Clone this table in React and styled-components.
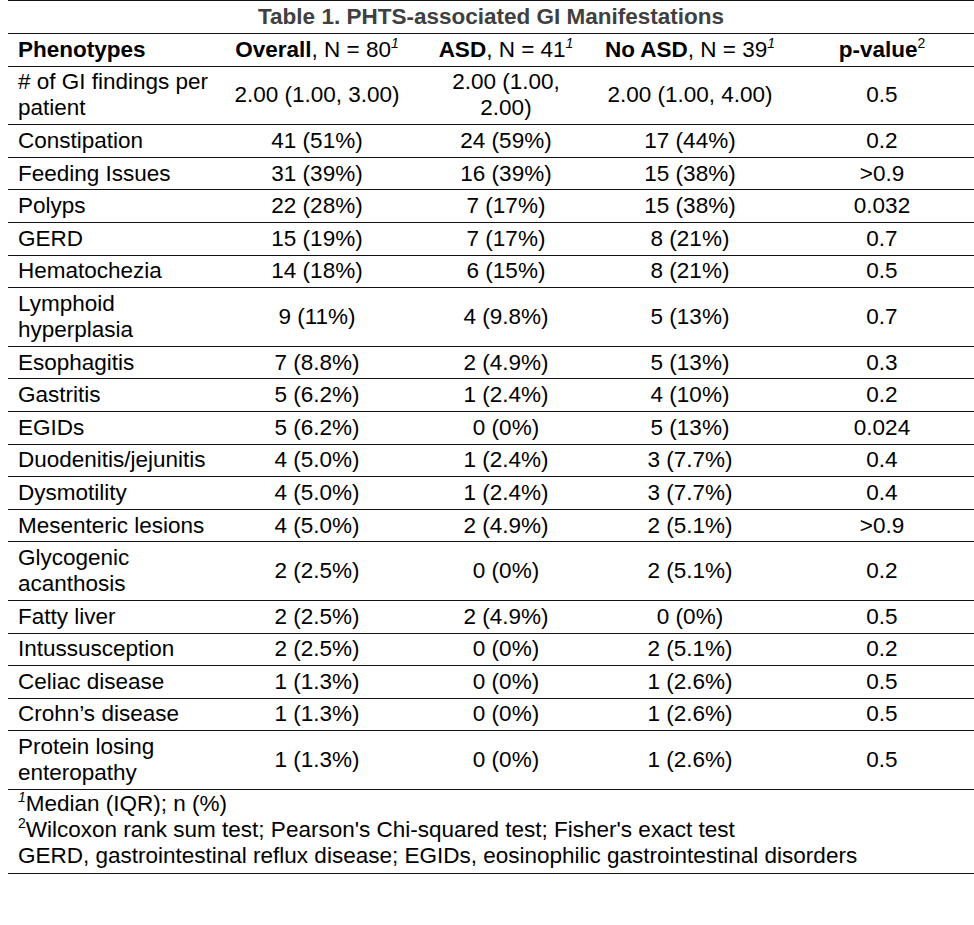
import React from "react";
import styled, { createGlobalStyle } from "styled-components";

const Global = createGlobalStyle`
  html, body { margin: 0; padding: 0; background: #ffffff; }
  body { font-family: "Liberation Sans", Arial, sans-serif; color: #000; }
`;

const Page = styled.div`
  padding: 0 0 0 8px;
`;

const Table = styled.table`
  width: 966px;
  border-collapse: collapse;
  table-layout: fixed;
  font-family: "Liberation Sans", Arial, sans-serif;
  font-size: 22.5px;
  line-height: 26px;
  color: #000;
  border-top: 1px solid #111;
  border-bottom: 1px solid #111;
`;

const TitleCell = styled.th`
  padding: 3px 10px 3px;
  text-align: center;
  font-weight: bold;
  color: #404040;
  border-bottom: 1px solid #111;
`;

const HeadCell = styled.th`
  padding: 2.8px ${(p) => p.$padR ?? 10}px 2.8px ${(p) => p.$padL ?? 10}px;
  font-weight: normal;
  text-align: ${(p) => p.$align || "center"};
  vertical-align: middle;
  border-bottom: 1px solid #111;
  white-space: nowrap;
`;

const Cell = styled.td`
  padding: 2.8px ${(p) => p.$padR ?? 10}px 2.8px ${(p) => p.$padL ?? 10}px;
  text-align: ${(p) => p.$align || "center"};
  vertical-align: middle;
  border-bottom: 1px solid #111;
`;

const Bold = styled.b`
  font-weight: bold;
`;

const Sup = styled.sup`
  font-size: 14px;
  line-height: 0;
  position: relative;
  top: -0.6em;
  vertical-align: baseline;
  font-style: ${(p) => (p.$italic ? "italic" : "normal")};
  font-weight: normal;
`;

const FootCell = styled.td`
  padding: 1px 10px 4px;
  text-align: left;
  vertical-align: top;
`;

const FootLine = styled.div`
  line-height: 26px;
`;

const rows = [
  ["# of GI findings per patient", "2.00 (1.00, 3.00)", "2.00 (1.00, 2.00)", "2.00 (1.00, 4.00)", "0.5"],
  ["Constipation", "41 (51%)", "24 (59%)", "17 (44%)", "0.2"],
  ["Feeding Issues", "31 (39%)", "16 (39%)", "15 (38%)", ">0.9"],
  ["Polyps", "22 (28%)", "7 (17%)", "15 (38%)", "0.032"],
  ["GERD", "15 (19%)", "7 (17%)", "8 (21%)", "0.7"],
  ["Hematochezia", "14 (18%)", "6 (15%)", "8 (21%)", "0.5"],
  ["Lymphoid hyperplasia", "9 (11%)", "4 (9.8%)", "5 (13%)", "0.7"],
  ["Esophagitis", "7 (8.8%)", "2 (4.9%)", "5 (13%)", "0.3"],
  ["Gastritis", "5 (6.2%)", "1 (2.4%)", "4 (10%)", "0.2"],
  ["EGIDs", "5 (6.2%)", "0 (0%)", "5 (13%)", "0.024"],
  ["Duodenitis/jejunitis", "4 (5.0%)", "1 (2.4%)", "3 (7.7%)", "0.4"],
  ["Dysmotility", "4 (5.0%)", "1 (2.4%)", "3 (7.7%)", "0.4"],
  ["Mesenteric lesions", "4 (5.0%)", "2 (4.9%)", "2 (5.1%)", ">0.9"],
  ["Glycogenic acanthosis", "2 (2.5%)", "0 (0%)", "2 (5.1%)", "0.2"],
  ["Fatty liver", "2 (2.5%)", "2 (4.9%)", "0 (0%)", "0.5"],
  ["Intussusception", "2 (2.5%)", "0 (0%)", "2 (5.1%)", "0.2"],
  ["Celiac disease", "1 (1.3%)", "0 (0%)", "1 (2.6%)", "0.5"],
  ["Crohn’s disease", "1 (1.3%)", "0 (0%)", "1 (2.6%)", "0.5"],
  ["Protein losing enteropathy", "1 (1.3%)", "0 (0%)", "1 (2.6%)", "0.5"],
];

const widths = [212, 194, 184, 184, 192];
const pads = [
  { $padL: 10, $padR: 8, $align: "left" },
  {},
  { $padL: 12, $padR: 12 },
  { $padL: 6, $padR: 6 },
  { $padL: 10, $padR: 2 },
];

export default function App() {
  return (
    <>
      <Global />
      <Page>
        <Table>
          <colgroup>
            {widths.map((w, i) => (
              <col key={i} style={{ width: w }} />
            ))}
          </colgroup>
          <thead>
            <tr>
              <TitleCell colSpan={5}>Table 1. PHTS-associated GI Manifestations</TitleCell>
            </tr>
            <tr>
              <HeadCell {...pads[0]}>
                <Bold>Phenotypes</Bold>
              </HeadCell>
              <HeadCell {...pads[1]}>
                <Bold>Overall</Bold>, N = 80<Sup $italic>1</Sup>
              </HeadCell>
              <HeadCell {...pads[2]}>
                <Bold>ASD</Bold>, N = 41<Sup $italic>1</Sup>
              </HeadCell>
              <HeadCell {...pads[3]}>
                <Bold>No ASD</Bold>, N = 39<Sup $italic>1</Sup>
              </HeadCell>
              <HeadCell {...pads[4]}>
                <Bold>p-value</Bold>
                <Sup>2</Sup>
              </HeadCell>
            </tr>
          </thead>
          <tbody>
            {rows.map((r) => (
              <tr key={r[0]}>
                {r.map((v, i) => (
                  <Cell key={i} {...pads[i]}>
                    {v}
                  </Cell>
                ))}
              </tr>
            ))}
          </tbody>
          <tfoot>
            <tr>
              <FootCell colSpan={5}>
                <FootLine>
                  <Sup $italic>1</Sup>Median (IQR); n (%)
                </FootLine>
                <FootLine>
                  <Sup>2</Sup>Wilcoxon rank sum test; Pearson's Chi-squared test; Fisher's exact test
                </FootLine>
                <FootLine>
                  GERD, gastrointestinal reflux disease; EGIDs, eosinophilic gastrointestinal disorders
                </FootLine>
              </FootCell>
            </tr>
          </tfoot>
        </Table>
      </Page>
    </>
  );
}
